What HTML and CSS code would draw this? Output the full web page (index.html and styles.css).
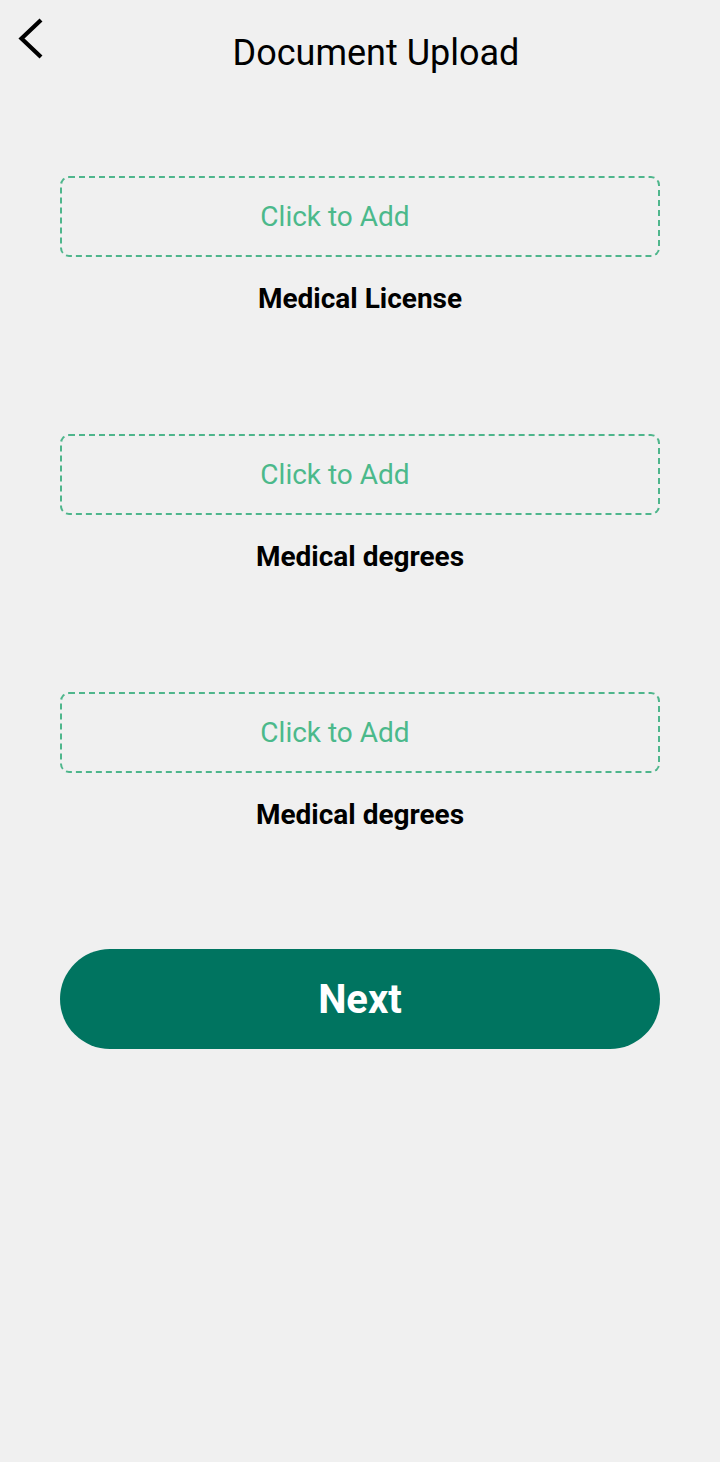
FILE: index.html
```html
<!DOCTYPE html>
<html>
<head>
<meta charset="utf-8">
<link rel="stylesheet" href="styles.css">
</head>
<body>
<div class="page">
  <header class="header">
    <span class="back" aria-label="Back">
      <svg width="30" height="46" viewBox="0 0 30 46"><path d="M25 4 L5.5 22.5 L25 41" fill="none" stroke="#000" stroke-width="4.2" stroke-linejoin="miter" stroke-linecap="butt"/></svg>
    </span>
    <h1 class="title">Document Upload</h1>
  </header>
  <main class="content">
    <section class="doc">
      <div class="drop"><span class="drop-text">Click to Add</span></div>
      <div class="label">Medical License</div>
    </section>
    <section class="doc">
      <div class="drop"><span class="drop-text">Click to Add</span></div>
      <div class="label">Medical degrees</div>
    </section>
    <section class="doc">
      <div class="drop"><span class="drop-text">Click to Add</span></div>
      <div class="label">Medical degrees</div>
    </section>
    <button class="next">Next</button>
  </main>
</div>
</body>
</html>
```

FILE: styles.css
```css
html, body {
  margin: 0;
  padding: 0;
  background: #f0f0f0;
}
body {
  font-family: Roboto, "Noto Sans", sans-serif;
  width: 720px;
  height: 1462px;
}
.page {
  display: flex;
  flex-direction: column;
}
.header {
  position: relative;
  height: 100px;
  display: flex;
  justify-content: center;
}
.back {
  position: absolute;
  left: 16px;
  top: 16px;
  width: 30px;
  height: 46px;
}
.back svg { display: block; }
.title {
  margin: 0;
  padding-top: 30px;
  padding-left: 32px;
  font-size: 36px;
  line-height: 46px;
  font-weight: 400;
  color: #000;
  height: 46px;
}
.content {
  display: flex;
  flex-direction: column;
  padding: 76px 60px 0 60px;
  gap: 119px;
}
.doc {
  display: flex;
  flex-direction: column;
  align-items: center;
}
.drop {
  box-sizing: border-box;
  width: 600px;
  height: 81px;
  border: 2px dashed #4fb68c;
  border-radius: 9px;
  display: flex;
  align-items: center;
  justify-content: center;
  padding-right: 50px;
  padding-bottom: 1px;
}
.drop-text {
  color: #4bb98b;
  font-size: 28px;
}
.label {
  margin-top: 26px;
  font-size: 28px;
  line-height: 32px;
  font-weight: 700;
  color: #000;
}
.next {
  height: 100px;
  width: 600px;
  border: 0;
  border-radius: 50px;
  background: #007460;
  color: #fff;
  font-family: Roboto, sans-serif;
  font-size: 40px;
  font-weight: 700;
  margin-top: -1px;
}
```
